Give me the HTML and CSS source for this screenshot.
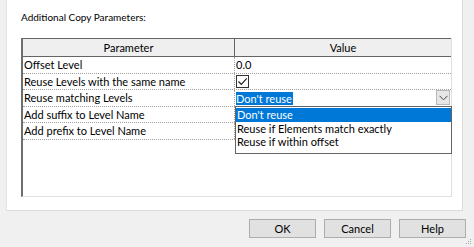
FILE: index.html
```html
<!DOCTYPE html>
<html>
<head>
<meta charset="utf-8">
<link rel="stylesheet" href="styles.css">
</head>
<body>
<div class="window">
  <div class="panel">
    <div class="title">Additional Copy Parameters:</div>
    <div class="grid">
      <div class="head">
        <div class="hcell hcell-param">Parameter</div>
        <div class="hcell">Value</div>
      </div>
      <div class="row">
        <div class="cell cell-param">Offset Level</div>
        <div class="cell cell-value">0.0</div>
      </div>
      <div class="row">
        <div class="cell cell-param">Reuse Levels with the same name</div>
        <div class="cell cell-value">
          <span class="check">
            <svg width="11" height="11" viewBox="0 0 11 11"><path d="M1.5 5.5 L4.3 8.3 L9.8 2.3" fill="none" stroke="#222" stroke-width="1.2"/></svg>
          </span>
        </div>
      </div>
      <div class="row">
        <div class="cell cell-param">Reuse matching Levels</div>
        <div class="cell cell-value combo">
          <span class="sel">Don't reuse</span>
          <span class="arrow">
            <svg width="9" height="6" viewBox="0 0 9 6"><path d="M0.5 0.8 L4.5 4.8 L8.5 0.8" fill="none" stroke="#444" stroke-width="1"/></svg>
          </span>
        </div>
      </div>
      <div class="row">
        <div class="cell cell-param">Add suffix to Level Name</div>
        <div class="cell cell-value"></div>
      </div>
      <div class="row">
        <div class="cell cell-param">Add prefix to Level Name</div>
        <div class="cell cell-value"></div>
      </div>
      <div class="list">
        <div class="item item-active">Don't reuse</div>
        <div class="item">Reuse if Elements match exactly</div>
        <div class="item">Reuse if within offset</div>
      </div>
    </div>
  </div>
  <div class="buttons">
    <div class="btn">OK</div>
    <div class="btn">Cancel</div>
    <div class="btn">Help</div>
  </div>
  <div class="grip">
    <svg width="6" height="6" viewBox="0 0 6 6" fill="#a8a8a8"><rect x="4" y="0" width="1" height="1"/><rect x="2" y="2" width="1" height="1"/><rect x="4" y="2" width="1" height="1"/><rect x="0" y="4" width="1" height="1"/><rect x="2" y="4" width="1" height="1"/><rect x="4" y="4" width="1" height="1"/></svg>
  </div>
</div>
</body>
</html>
```
FILE: styles.css
```css
html, body {
  margin: 0;
  padding: 0;
}
body {
  background: #f0f0f0;
  font-family: Lato, "Noto Sans", sans-serif;
  font-size: 11px;
  color: #000;
}
.window {
  position: relative;
  width: 474px;
  height: 247px;
  overflow: hidden;
}
.panel {
  margin-left: 6px;
  width: 457px;
  height: 211px;
  background: #fff;
  border-left: 1px solid #e3e3e3;
  border-right: 1px solid #dcdcdc;
  border-bottom: 1px solid #dcdcdc;
  padding-top: 9px;
  box-sizing: border-box;
  display: flex;
  flex-direction: column;
}
.title {
  margin-left: 14px;
  height: 16px;
  line-height: 16px;
  font-size: 10px;
}
.grid {
  position: relative;
  margin-top: 13px;
  margin-left: 14px;
  width: 431px;
  height: 159px;
  box-sizing: border-box;
  border-left: 2px solid #6e6e6e;
  border-right: 1px solid #e0e0e0;
  border-bottom: 1px solid #e0e0e0;
}
.head {
  display: grid;
  grid-template-columns: 212px 1fr;
  height: 19px;
  box-sizing: border-box;
  border-top: 1px solid #646464;
  border-bottom: 1px solid #646464;
  background: #efefef;
}
.hcell {
  text-align: center;
  line-height: 17px;
}
.hcell-param {
  border-right: 1px solid #646464;
}
.row {
  display: grid;
  grid-template-columns: 212px 1fr;
  height: 16.6px;
  box-sizing: border-box;
  border-bottom: 1px dotted #a0a0a0;
}
.cell {
  line-height: 15px;
  white-space: nowrap;
  overflow: hidden;
}
.cell-param {
  padding-left: 1px;
  border-right: 1px dotted #a0a0a0;
}
.cell-value {
  padding-left: 1px;
  position: relative;
  display: flex;
  align-items: center;
}
.check {
  width: 13px;
  height: 13px;
  box-sizing: border-box;
  border: 1px solid #333;
  display: flex;
  align-items: center;
  justify-content: center;
  margin-top: 1px;
}
.combo {
  justify-content: space-between;
}
.sel {
  background: #0078d7;
  color: #fff;
  line-height: 13px;
  padding: 0 1px 0 0;
  margin-top: 1px;
}
.arrow {
  width: 14px;
  height: 15px;
  box-sizing: border-box;
  border: 1px solid #b8b8b8;
  background: #e6e6e6;
  display: flex;
  align-items: center;
  justify-content: center;
  margin-right: 1px;
}
.list {
  position: absolute;
  left: 212px;
  top: 68px;
  width: 217px;
  height: 48px;
  box-sizing: border-box;
  border: 1px solid #646464;
  background: #fff;
  padding-top: 1px;
}
.item {
  height: 13.5px;
  line-height: 13.5px;
  padding-left: 1px;
  white-space: nowrap;
}
.item-active {
  background: #0078d7;
  color: #fff;
}
.buttons {
  display: flex;
  justify-content: flex-end;
  gap: 8px;
  margin-top: 8px;
  margin-right: 8px;
}
.btn {
  width: 67px;
  height: 19px;
  box-sizing: border-box;
  border: 1px solid #adadad;
  background: #e1e1e1;
  text-align: center;
  line-height: 17px;
}
.grip {
  position: absolute;
  right: 2px;
  bottom: 2px;
  width: 6px;
  height: 6px;
  line-height: 0;
}
```
